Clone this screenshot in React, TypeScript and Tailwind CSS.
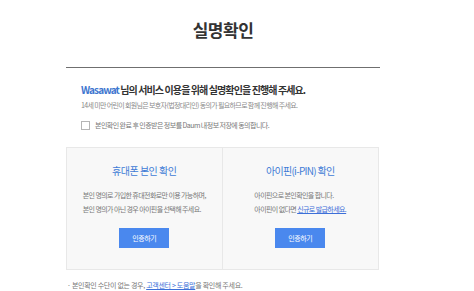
export default function App() {
  const font = { fontFamily: '"Noto Sans CJK KR", "Noto Sans", sans-serif' }

  return (
    <div className="w-[474px] h-[291px] bg-white overflow-hidden" style={font}>
      {/* Title */}
      <h1 className="pt-[20px] ml-[66px] w-[314px] text-center text-[17px] leading-[20px] font-bold text-[#333] tracking-[-0.5px]">
        실명확인
      </h1>

      <div className="ml-[66px] w-[314px] mt-[27px] border-t border-[#6f6f6f]">
        {/* Intro */}
        <div className="px-[15px] pt-[15px]">
          <p className="text-[10px] leading-[14px] font-semibold text-[#333] tracking-[-0.9px]">
            <span className="text-[#3e76cf]">Wasawat</span> 님의 서비스 이용을 위해 실명확인을 진행해 주세요.
          </p>
          <p className="mt-[3px] text-[7px] leading-[10px] text-[#8a8a8a] tracking-[-0.65px]">
            14세 미만 어린이 회원님은 보호자(법정대리인) 동의가 필요하므로 함께 진행해 주세요.
          </p>
          <label className="mt-[10px] flex items-center gap-[5px] h-[10px]">
            <span className="w-[9px] h-[9px] border border-[#b5b5b5] bg-white"></span>
            <span className="text-[7px] leading-[10px] text-[#777] tracking-[-0.55px]">
              본인확인 완료 후 인증받은 정보를 Daum 내정보 저장에 동의합니다.
            </span>
          </label>
        </div>

        {/* Options */}
        <div className="mt-[17px] w-[313px] h-[123px] grid grid-cols-2 bg-[#f8f8f8] border border-[#e8e8e8]">
          <div className="flex flex-col items-center pt-[16px] border-r border-[#e8e8e8]">
            <h2 className="text-[10px] leading-[14px] text-[#3f7bd6] tracking-[-0.5px]">휴대폰 본인 확인</h2>
            <div className="mt-[10px] text-[7px] leading-[14px] text-[#777] tracking-[-0.6px] text-left">
              <p>본인 명의로 가입한 휴대전화로만 이용 가능하며,</p>
              <p>본인 명의가 아닌 경우 아이핀을 선택해 주세요.</p>
            </div>
            <button className="mt-[12px] w-[50px] h-[20px] bg-[#4a88ee] text-white text-[7px] tracking-[-0.5px]">
              인증하기
            </button>
          </div>
          <div className="flex flex-col items-center pt-[16px]">
            <h2 className="text-[10px] leading-[14px] text-[#3f7bd6] tracking-[-0.7px]">아이핀(i-PIN) 확인</h2>
            <div className="mt-[10px] text-[7px] leading-[14px] text-[#777] tracking-[-0.6px] text-left">
              <p>아이핀으로 본인확인을 합니다.</p>
              <p>
                아이핀이 없다면 <a className="text-[#3d6fd8] underline">신규로 발급하세요.</a>
              </p>
            </div>
            <button className="mt-[12px] w-[50px] h-[20px] bg-[#4a88ee] text-white text-[7px] tracking-[-0.5px]">
              인증하기
            </button>
          </div>
        </div>

        {/* Footer */}
        <p className="mt-[10px] pl-[1px] text-[7px] leading-[10px] text-[#777] tracking-[-0.3px]">
          · 본인확인 수단이 없는 경우, <a className="text-[#3d6fd8] underline">고객센터 &gt; 도움말</a>을 확인해 주세요.
        </p>
      </div>
    </div>
  )
}
